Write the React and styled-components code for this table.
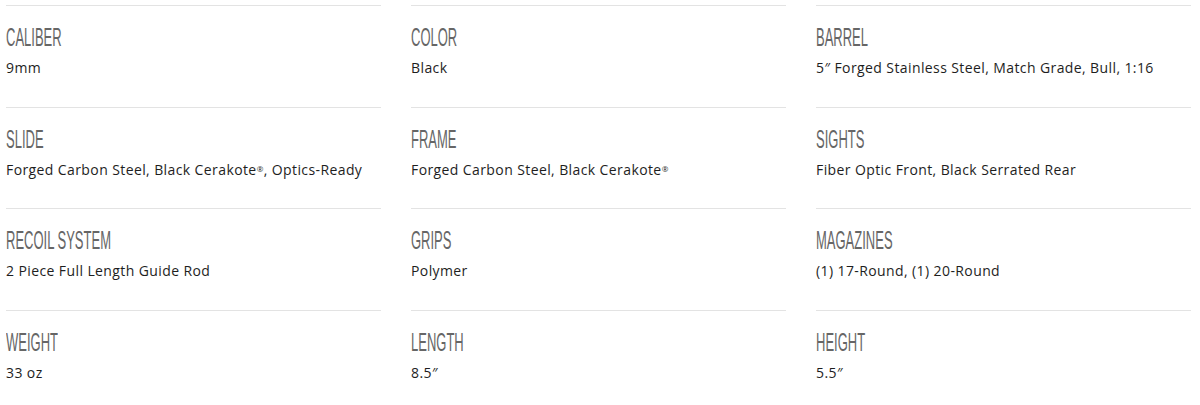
import React from 'react';
import styled, { createGlobalStyle } from 'styled-components';

const GlobalStyle = createGlobalStyle`
    body {
        margin: 0;
        background: #ffffff;
    }
`;

const specs = [
    { label: 'CALIBER', value: '9mm' },
    { label: 'COLOR', value: 'Black' },
    { label: 'BARREL', value: '5″ Forged Stainless Steel, Match Grade, Bull, 1:16' },
    { label: 'SLIDE', value: ['Forged Carbon Steel, Black Cerakote', ', Optics-Ready'] },
    { label: 'FRAME', value: ['Forged Carbon Steel, Black Cerakote', ''] },
    { label: 'SIGHTS', value: 'Fiber Optic Front, Black Serrated Rear' },
    { label: 'RECOIL SYSTEM', value: '2 Piece Full Length Guide Rod' },
    { label: 'GRIPS', value: 'Polymer' },
    { label: 'MAGAZINES', value: '(1) 17-Round, (1) 20-Round' },
    { label: 'WEIGHT', value: '33 oz' },
    { label: 'LENGTH', value: '8.5″' },
    { label: 'HEIGHT', value: '5.5″' },
];

const SpecGrid = styled.div`
    display: grid;
    grid-template-columns: repeat(3, 375px);
    column-gap: 30px;
    padding: 5px 6px 0;
`;

const SpecItem = styled.div`
    height: 101.67px;
    box-sizing: border-box;
    border-top: 1px solid #e3e3e3;
    padding-top: 19px;
`;

const SpecLabel = styled.div`
    display: inline-block;
    font-family: 'Liberation Sans', Arial, sans-serif;
    font-size: 25px;
    line-height: 25px;
    color: #666666;
    white-space: nowrap;
    transform: scaleX(0.52);
    transform-origin: left center;
`;

const SpecValue = styled.div`
    margin-top: 8px;
    font-family: 'Open Sans', 'Lato', sans-serif;
    font-size: 14px;
    line-height: 20px;
    letter-spacing: 0.4px;
    color: #1e1e1e;
`;

const Reg = styled.sup`
    font-size: 8px;
    vertical-align: top;
    position: relative;
    top: -1px;
`;

const App = () => (
    <>
        <GlobalStyle />
        <SpecGrid>
            {specs.map((item) => (
                <SpecItem key={item.label}>
                    <SpecLabel>{item.label}</SpecLabel>
                    <SpecValue>
                        {Array.isArray(item.value) ? (
                            <>
                                {item.value[0]}
                                <Reg>®</Reg>
                                {item.value[1]}
                            </>
                        ) : (
                            item.value
                        )}
                    </SpecValue>
                </SpecItem>
            ))}
        </SpecGrid>
    </>
);

export default App;
